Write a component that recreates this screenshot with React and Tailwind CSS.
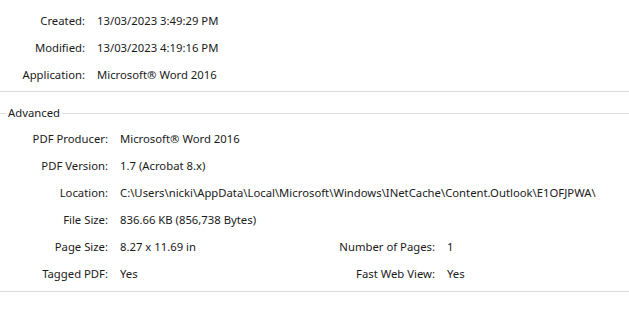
export default function App() {
  const font = { fontFamily: '"Segoe UI", "Noto Sans", "Open Sans", sans-serif' };
  const Row = ({ label, value, lw }) => (
    <div className="flex h-[27px] items-center">
      <div className={`${lw} shrink-0 text-right`}>{label}</div>
      <div className="pl-[12px] whitespace-nowrap">{value}</div>
    </div>
  );
  return (
    <div className="w-[629px] h-[318px] bg-white text-[11.3px] text-[#1a1a1a] overflow-hidden" style={font}>
      <div className="pt-[8px]">
        <Row lw="w-[85px]" label="Created:" value="13/03/2023 3:49:29 PM" />
        <Row lw="w-[85px]" label="Modified:" value="13/03/2023 4:19:16 PM" />
        <Row lw="w-[85px]" label="Application:" value="Microsoft® Word 2016" />
      </div>
      <div className="mt-[2px] border-t border-[#dcdcdc]" />
      <div className="mt-[13px] flex h-[16px] items-center">
        <div className="w-[6px] border-t border-[#dcdcdc]" />
        <div className="px-[2px] leading-none">Advanced</div>
        <div className="flex-1 border-t border-[#dcdcdc]" />
      </div>
      <div className="mt-[5px]">
        <Row lw="w-[108px]" label="PDF Producer:" value="Microsoft® Word 2016" />
        <Row lw="w-[108px]" label="PDF Version:" value="1.7 (Acrobat 8.x)" />
        <Row lw="w-[108px]" label="Location:" value="C:\Users\nicki\AppData\Local\Microsoft\Windows\INetCache\Content.Outlook\E1OFJPWA\" />
        <Row lw="w-[108px]" label="File Size:" value="836.66 KB (856,738 Bytes)" />
        <div className="flex">
          <div className="w-[327px]">
            <Row lw="w-[108px]" label="Page Size:" value="8.27 x 11.69 in" />
            <Row lw="w-[108px]" label="Tagged PDF:" value="Yes" />
          </div>
          <div>
            <Row lw="w-[108px]" label="Number of Pages:" value="1" />
            <Row lw="w-[108px]" label="Fast Web View:" value="Yes" />
          </div>
        </div>
      </div>
      <div className="mt-[3px] border-t border-[#dcdcdc]" />
    </div>
  );
}
